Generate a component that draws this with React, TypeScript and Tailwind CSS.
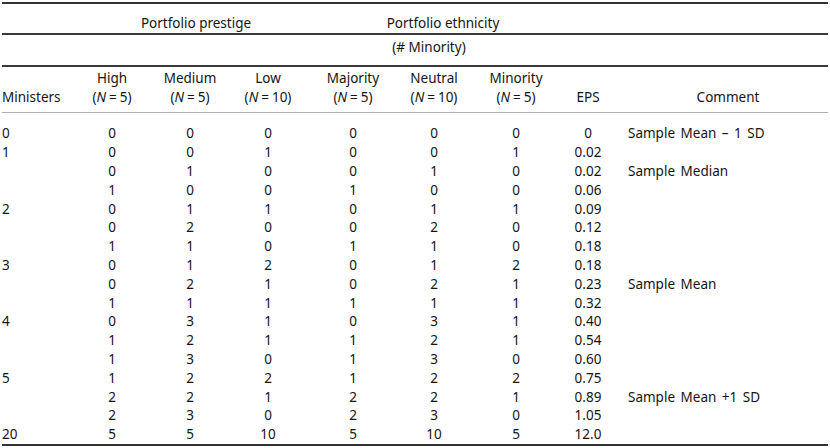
import React from "react";

type Row = {
  ministers: string;
  vals: string[];
  eps: string;
  comment?: string;
};

const rows: Row[] = [
  { ministers: "0", vals: ["0", "0", "0", "0", "0", "0"], eps: "0", comment: "Sample Mean \u2013 1 SD" },
  { ministers: "1", vals: ["0", "0", "1", "0", "0", "1"], eps: "0.02" },
  { ministers: "", vals: ["0", "1", "0", "0", "1", "0"], eps: "0.02", comment: "Sample Median" },
  { ministers: "", vals: ["1", "0", "0", "1", "0", "0"], eps: "0.06" },
  { ministers: "2", vals: ["0", "1", "1", "0", "1", "1"], eps: "0.09" },
  { ministers: "", vals: ["0", "2", "0", "0", "2", "0"], eps: "0.12" },
  { ministers: "", vals: ["1", "1", "0", "1", "1", "0"], eps: "0.18" },
  { ministers: "3", vals: ["0", "1", "2", "0", "1", "2"], eps: "0.18" },
  { ministers: "", vals: ["0", "2", "1", "0", "2", "1"], eps: "0.23", comment: "Sample Mean" },
  { ministers: "", vals: ["1", "1", "1", "1", "1", "1"], eps: "0.32" },
  { ministers: "4", vals: ["0", "3", "1", "0", "3", "1"], eps: "0.40" },
  { ministers: "", vals: ["1", "2", "1", "1", "2", "1"], eps: "0.54" },
  { ministers: "", vals: ["1", "3", "0", "1", "3", "0"], eps: "0.60" },
  { ministers: "5", vals: ["1", "2", "2", "1", "2", "2"], eps: "0.75" },
  { ministers: "", vals: ["2", "2", "1", "2", "2", "1"], eps: "0.89", comment: "Sample Mean +1 SD" },
  { ministers: "", vals: ["2", "3", "0", "2", "3", "0"], eps: "1.05" },
  { ministers: "20", vals: ["5", "5", "10", "5", "10", "5"], eps: "12.0" },
];

const groups = [
  { label: "High", n: "5" },
  { label: "Medium", n: "5" },
  { label: "Low", n: "10" },
  { label: "Majority", n: "5" },
  { label: "Neutral", n: "10" },
  { label: "Minority", n: "5" },
];

function NEq({ n }: { n: string }) {
  return (
    <span>
      (<span className="italic">N</span>
      <span className="mx-[3px]">=</span>
      {n})
    </span>
  );
}

export default function App() {
  return (
    <div className="w-[830px] h-[448px] bg-white px-[2px] pt-[2px] overflow-hidden text-[#141414] text-[13.5px] font-['Noto_Sans',sans-serif]">
      {/* top rule */}
      <div className="h-[2px] bg-[#333333]" />
      <table className="w-full table-fixed border-collapse">
        <colgroup>
          <col className="w-[70px]" />
          <col className="w-[80px]" />
          <col className="w-[76px]" />
          <col className="w-[80px]" />
          <col className="w-[90px]" />
          <col className="w-[72px]" />
          <col className="w-[92px]" />
          <col className="w-[52px]" />
          <col />
        </colgroup>
        <thead>
          <tr className="h-[30px] border-b-2 border-[#3a3a3a]">
            <th />
            <th colSpan={3} className="align-bottom font-normal leading-[18px] pb-[1px] pl-[12px]">
              Portfolio prestige
            </th>
            <th colSpan={3} className="align-bottom font-normal leading-[18px] pb-[1px] pl-[16px]">
              Portfolio ethnicity
            </th>
            <th colSpan={2} />
          </tr>
          <tr className="h-[32px] border-b-2 border-[#3a3a3a]">
            <th />
            <th colSpan={3} />
            <th colSpan={3} className="align-middle font-normal leading-[18px] pb-[6px] pr-[12px]">
              (# Minority)
            </th>
            <th colSpan={2} />
          </tr>
          <tr className="h-[46px] border-b border-[#b0b0b0]">
            <th className="align-bottom text-left font-normal leading-[19px] pb-[5px]">Ministers</th>
            {groups.map((g) => (
              <th key={g.label} className="align-bottom text-center font-normal leading-[19px] pb-[5px]">
                <div>{g.label}</div>
                <div>
                  <NEq n={g.n} />
                </div>
              </th>
            ))}
            <th className="align-bottom text-center font-normal leading-[19px] pb-[5px]">EPS</th>
            <th className="align-bottom text-center font-normal leading-[19px] pb-[5px] pl-[14px]">Comment</th>
          </tr>
        </thead>
        <tbody>
          <tr className="h-[12px]">
            <td colSpan={9} />
          </tr>
          {rows.map((r, i) => (
            <tr key={i} className="h-[18.8px] leading-[18px]">
              <td className="text-left">{r.ministers}</td>
              {r.vals.map((v, j) => (
                <td key={j} className="text-center">
                  {v}
                </td>
              ))}
              <td className="text-center">{r.eps}</td>
              <td className="text-left pl-[14px] whitespace-nowrap [word-spacing:2px]">{r.comment ?? ""}</td>
            </tr>
          ))}
        </tbody>
      </table>
      {/* bottom rule */}
      <div className="h-[2px] bg-[#333333]" />
    </div>
  );
}
